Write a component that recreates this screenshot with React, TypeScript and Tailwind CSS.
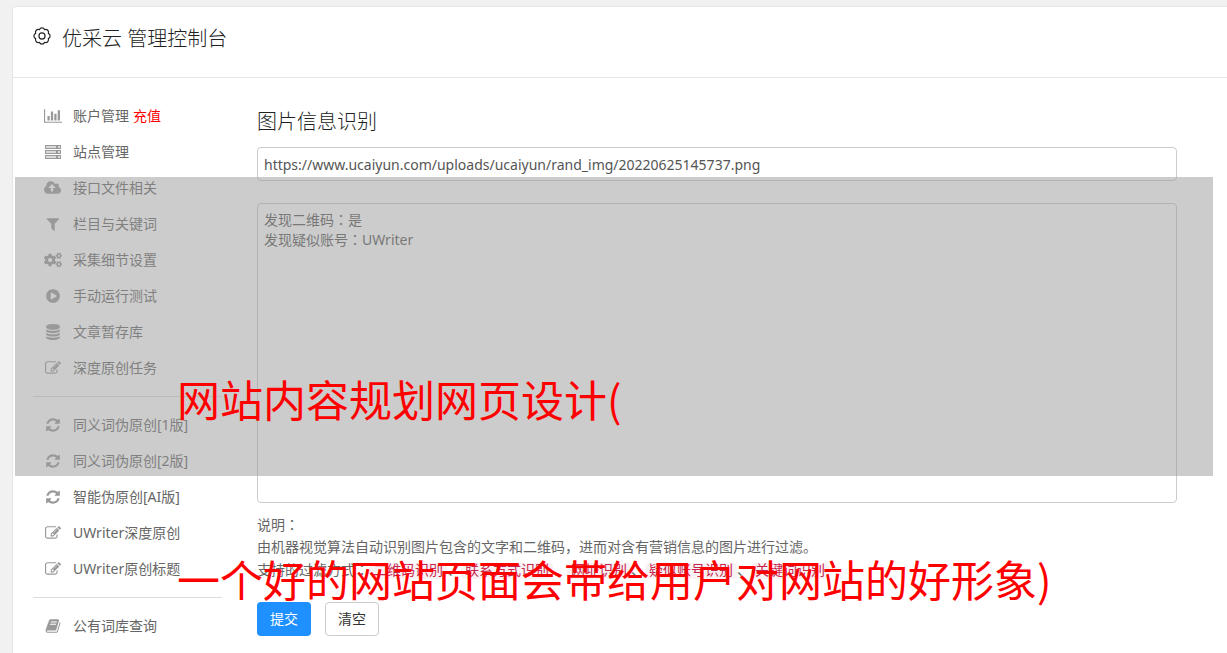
import React, { useState } from 'react';
import { FaCogs } from 'react-icons/fa';

type GlyphProps = { d: string; w?: number };

function Glyph({ d, w = 1792 }: GlyphProps) {
  return (
    <svg viewBox={`0 0 ${w} 1792`} className="h-4 w-auto" fill="currentColor" aria-hidden="true">
      <path d={d} />
    </svg>
  );
}

const BAR_CHART = 'M640 896v512h-256v-512h256zM1024 384v1024h-256v-1024h256zM2048 1536v128h-2048v-1536h128v1408h1920zM1408 640v768h-256v-768h256zM1792 256v1152h-256v-1152h256z';
const CLOUD_UP = 'M1280 864q0-14-9-23l-352-352q-9-9-23-9t-23 9l-351 351q-10 12-10 24 0 14 9 23t23 9h224v352q0 13 9.5 22.5t22.5 9.5h192q13 0 22.5-9.5t9.5-22.5v-352h224q13 0 22.5-9.5t9.5-22.5zm640 288q0 159-112.5 271.5t-271.5 112.5h-1088q-185 0-316.5-131.5t-131.5-316.5q0-130 70-240t188-165q-2-30-2-43 0-212 150-362t362-150q156 0 285.5 87t188.5 231q71-62 166-62 106 0 181 75t75 181q0 76-41 138 130 31 213.5 135.5t83.5 238.5z';
const FILTER = 'M1595 295q17 41-14 70l-493 493v742q0 42-39 59-13 5-25 5-27 0-45-19l-256-256q-19-19-19-45v-486l-493-493q-31-29-14-70 17-39 59-39h1280q42 0 59 39z';
const PLAY = 'M896 128q209 0 385.5 103t279.5 279.5 103 385.5-103 385.5-279.5 279.5-385.5 103-385.5-103-279.5-279.5-103-385.5 103-385.5 279.5-279.5 385.5-103zm384 823q32-18 32-55t-32-55l-544-320q-31-19-64-1-32 19-32 56v640q0 37 32 56 16 8 32 8 17 0 32-9z';
const DATABASE = 'M896 768q237 0 443-43t325-127v170q0 69-103 128t-280 93.5-385 34.5-385-34.5-280-93.5-103-128v-170q119 84 325 127t443 43zm0 768q237 0 443-43t325-127v170q0 69-103 128t-280 93.5-385 34.5-385-34.5-280-93.5-103-128v-170q119 84 325 127t443 43zm0-384q237 0 443-43t325-127v170q0 69-103 128t-280 93.5-385 34.5-385-34.5-280-93.5-103-128v-170q119 84 325 127t443 43zm0-1152q208 0 385 34.5t280 93.5 103 128v128q0 69-103 128t-280 93.5-385 34.5-385-34.5-280-93.5-103-128v-128q0-69 103-128t280-93.5 385-34.5z';
const EDIT = 'M888 1184l116-116-152-152-116 116v56h96v96h56zm440-720q-16-16-33 1l-350 350q-17 17-1 33t33-1l350-350q17-17 1-33zm80 594v190q0 119-84.5 203.5t-203.5 84.5h-832q-119 0-203.5-84.5t-84.5-203.5v-832q0-119 84.5-203.5t203.5-84.5h832q63 0 117 25 15 7 18 23 3 17-9 29l-49 49q-14 14-32 8-23-6-45-6h-832q-66 0-113 47t-47 113v832q0 66 47 113t113 47h832q66 0 113-47t47-113v-126q0-13 9-22l64-64q15-15 35-7t20 29zm-96-738l288 288-672 672h-288v-288zm444 132l-92 92-288-288 92-92q28-28 68-28t68 28l152 152q28 28 28 68t-28 68z';
const REFRESH = 'M1639 1056q0 5-1 7-64 268-268 434.5t-478 166.5q-146 0-282.5-55t-243.5-157l-129 129q-19 19-45 19t-45-19-19-45v-448q0-26 19-45t45-19h448q26 0 45 19t19 45-19 45l-137 137q71 66 161 102t187 36q134 0 250-65t186-179q11-17 53-117 8-23 30-23h192q13 0 22.5 9.5t9.5 22.5zm25-800v448q0 26-19 45t-45 19h-448q-26 0-45-19t-19-45 19-45l138-138q-148-137-349-137-134 0-250 65t-186 179q-11 17-53 117-8 23-30 23h-199q-13 0-22.5-9.5t-9.5-22.5v-7q65-268 270-434.5t480-166.5q146 0 284 55.5t245 156.5l130-129q19-19 45-19t45 19 19 45z';
const BOOK = 'M1703 478q40 57 18 129l-275 906q-19 64-76.5 107.5t-122.5 43.5h-923q-77 0-148.5-53.5t-99.5-131.5q-24-67-2-127 0-4 3-27t4-37q1-8-3-21.5t-3-19.5q2-11 8-21t16.5-23.5 16.5-23.5q23-38 45-91.5t30-91.5q3-10 .5-30t-.5-28q3-11 17-28t17-23q21-36 42-92t25-90q1-9-2.5-32t.5-28q4-13 22-30.5t22-22.5q19-26 42.5-84.5t27.5-96.5q1-8-3-25.5t-2-26.5q2-8 9-18t18-23 17-21q8-12 16.5-30.5t15-35 16-36 19.5-32 26.5-23.5 36-11.5 47.5 5.5l-1 3q38-9 51-9h761q74 0 114 56t18 130l-274 906q-36 119-71.5 153.5t-128.5 34.5h-869q-27 0-38 15-11 16-1 43 24 70 144 70h923q29 0 56-15.5t35-41.5l300-987q7-22 5-57 38 15 59 43zm-1064 2q-4 13 2 22.5t20 9.5h608q13 0 25.5-9.5t16.5-22.5l21-64q4-13-2-22.5t-20-9.5h-608q-13 0-25.5 9.5t-16.5 22.5zm-83 256q-4 13 2 22.5t20 9.5h608q13 0 25.5-9.5t16.5-22.5l21-64q4-13-2-22.5t-20-9.5h-608q-13 0-25.5 9.5t-16.5 22.5z';

function ServerIcon() {
  return (
    <svg viewBox="0 0 16 16" className="h-4 w-4" fill="currentColor" aria-hidden="true">
      <g fill="#d9d9d9" stroke="currentColor">
        <rect x="0.5" y="1.5" width="15" height="3" />
        <rect x="0.5" y="6.5" width="15" height="3" />
        <rect x="0.5" y="11.5" width="15" height="3" />
      </g>
      <path d="M11 2h2v2h-2zM11 7h2v2h-2zM11 12h2v2h-2z" />
    </svg>
  );
}

function GearIcon() {
  return (
    <svg viewBox="0 0 20 20" className="h-[18px] w-[18px] shrink-0" fill="none" stroke="currentColor" strokeWidth="1.3" strokeLinejoin="round" aria-hidden="true">
      <path d="M7.1 3A3.1 3.1 0 0 1 12.9 3A3.1 3.1 0 0 1 17 7.1A3.1 3.1 0 0 1 17 12.9A3.1 3.1 0 0 1 12.9 17A3.1 3.1 0 0 1 7.1 17A3.1 3.1 0 0 1 3 12.9A3.1 3.1 0 0 1 3 7.1A3.1 3.1 0 0 1 7.1 3Z" />
      <circle cx="10" cy="10" r="3.4" />
    </svg>
  );
}

const NAV_GROUPS = [
  [
    { label: '账户管理', extra: '充值', icon: <Glyph d={BAR_CHART} w={2048} /> },
    { label: '站点管理', icon: <ServerIcon /> },
    { label: '接口文件相关', icon: <Glyph d={CLOUD_UP} w={1920} /> },
    { label: '栏目与关键词', icon: <Glyph d={FILTER} /> },
    { label: '采集细节设置', icon: <FaCogs className="h-4 w-[18px]" /> },
    { label: '手动运行测试', icon: <Glyph d={PLAY} /> },
    { label: '文章暂存库', icon: <Glyph d={DATABASE} /> },
    { label: '深度原创任务', icon: <Glyph d={EDIT} /> },
  ],
  [
    { label: '同义词伪原创[1版]', icon: <Glyph d={REFRESH} /> },
    { label: '同义词伪原创[2版]', icon: <Glyph d={REFRESH} /> },
    { label: '智能伪原创[AI版]', icon: <Glyph d={REFRESH} /> },
    { label: 'UWriter深度原创', icon: <Glyph d={EDIT} /> },
    { label: 'UWriter原创标题', icon: <Glyph d={EDIT} /> },
  ],
  [{ label: '公有词库查询', icon: <Glyph d={BOOK} /> }],
];

const FILTERS = ['二维码识别', '联系方式识别', '网址识别', '疑似账号识别', '关键词识别'];

function Sidebar() {
  return (
    <nav className="w-[189px] shrink-0 pt-5">
      {NAV_GROUPS.map((group, i) => (
        <ul key={i} className={i > 0 ? 'mt-[10px] border-t border-[#ddd] pt-[10px]' : ''}>
          {group.map((item: { label: string; extra?: string; icon: React.ReactNode }) => (
            <li key={item.label}>
              <a href="#" className="flex h-9 items-center gap-[10px] pl-[10px] whitespace-nowrap">
                <span className="flex w-5 justify-center text-[#999]">{item.icon}</span>
                <span>
                  {item.label}
                  {item.extra && <span className="ml-1 text-[#f00]">{item.extra}</span>}
                </span>
              </a>
            </li>
          ))}
        </ul>
      ))}
    </nav>
  );
}

// full-width colon, centred in its cell
function Colon() {
  return <span className="font-['Noto_Sans_CJK_JP',sans-serif]">：</span>;
}

export default function App() {
  const [url, setUrl] = useState('https://www.ucaiyun.com/uploads/ucaiyun/rand_img/20220625145737.png');
  const [result, setResult] = useState('发现二维码：是\n发现疑似账号：UWriter');

  const clear = () => {
    setUrl('');
    setResult('');
  };

  return (
    <div className="relative h-screen overflow-hidden bg-[#f1f1f1] pt-[6px] pl-3 font-['Noto_Sans','Noto_Sans_CJK_SC',sans-serif] text-sm text-[#666]">
      <div className="min-h-full rounded-tl border-t border-l border-[#e5e5e5] bg-white">
        <header className="flex h-[71px] items-start gap-[11px] border-b border-[#e5e5e5] pt-5 pl-5 text-[#222]">
          <GearIcon />
          <h1 className="text-xl leading-6 font-light">优采云 管理控制台</h1>
        </header>

        <div className="flex pr-[50px] pl-5">
          <Sidebar />
          <main className="ml-[35px] min-w-0 flex-1 pt-8">
            <h2 className="text-xl leading-6 font-light text-[#222]">图片信息识别</h2>
            <form onSubmit={(e) => e.preventDefault()}>
              <input
                aria-label="图片地址"
                value={url}
                onChange={(e) => setUrl(e.target.value)}
                className="mt-[13px] block h-[34px] w-full rounded border border-[#ccc] bg-white px-[6px] text-[#555]"
              />
              <textarea
                aria-label="识别结果"
                value={result}
                onChange={(e) => setResult(e.target.value)}
                className="mt-[22px] block h-[300px] w-full resize-none rounded border border-[#ccc] bg-white px-[6px] py-[6px] font-['Noto_Sans','Noto_Sans_CJK_JP',sans-serif] leading-5 text-[#555]"
              />
              <div className="mt-[10px] leading-[22px]">
                <p>说明<Colon /></p>
                <p>由机器视觉算法自动识别图片包含的文字和二维码，进而对含有营销信息的图片进行过滤。</p>
                <p>
                  支持的过滤方式<Colon />
                  {FILTERS.map((name, i) => (
                    <React.Fragment key={name}>
                      {i > 0 && '、'}
                      <code className="rounded bg-[#f9f2f4] px-1 font-['Liberation_Mono','Noto_Sans_CJK_SC',monospace] text-sm text-[#c7254e]">{name}</code>
                    </React.Fragment>
                  ))}
                </p>
              </div>
              <div className="mt-[21px] flex gap-[14px]">
                <button type="submit" className="h-[34px] rounded bg-[#1e90ff] px-[13px] text-white">提交</button>
                <button type="button" onClick={clear} className="h-[34px] rounded border border-[#ccc] bg-white px-3 text-[#333]">清空</button>
              </div>
            </form>
          </main>
        </div>
      </div>

      {/* Caption laid over the console */}
      <div className="pointer-events-none absolute top-[177px] right-[14px] left-[15px] h-[299px] bg-[#999]/50" />
      <div className="pointer-events-none absolute top-[376px] left-[177px] font-['Noto_Sans_CJK_SC',sans-serif] text-[43px] leading-[44px] whitespace-nowrap text-[#f00]">
        <p>网站内容规划网页设计(</p>
        <p className="mt-[136px]">一个好的网站页面会带给用户对网站的好形象)</p>
      </div>
    </div>
  );
}
